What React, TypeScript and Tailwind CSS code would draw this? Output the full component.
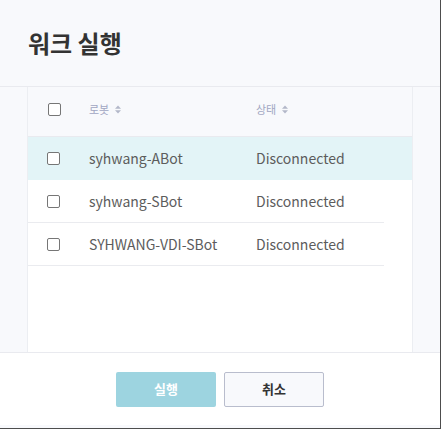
import React from "react";

const robots = [
  { name: "syhwang-ABot", status: "Disconnected", active: true },
  { name: "syhwang-SBot", status: "Disconnected", active: false },
  { name: "SYHWANG-VDI-SBot", status: "Disconnected", active: false },
];

function SortIcon() {
  return (
    <svg width="6" height="9" viewBox="0 0 6 9" className="ml-[6px]">
      <path d="M3 0.5 L6 3.8 L0 3.8 Z" fill="#b3b7c9" />
      <path d="M3 8.5 L6 5.2 L0 5.2 Z" fill="#b3b7c9" />
    </svg>
  );
}

function Checkbox() {
  return (
    <span className="block w-[13px] h-[13px] rounded-[2px] border border-[#767676] bg-white" />
  );
}

function App() {
  return (
    <div
      className="w-[441px] h-[429px] bg-[#f8f9fc] border-r border-b border-[#4d4d4d] flex flex-col"
      style={{ fontFamily: '"Noto Sans CJK KR", "Noto Sans", sans-serif' }}
    >
      <header className="h-[87px] shrink-0 border-b border-[#e9eaef] flex items-center px-[28px]">
        <h1 className="text-[24px] font-bold text-[#333] leading-none">워크 실행</h1>
      </header>

      <div className="h-[265px] shrink-0 flex pl-[27px]">
        <div className="w-[386px] bg-white border-x border-[#eceef2] flex flex-col">
          <div className="h-[50px] pb-[4px] bg-[#f8f9fc] border-b border-[#e9eaef] flex items-center text-[11px] text-[#a1a6c2]">
            <div className="w-[61px] pl-[20px]">
              <Checkbox />
            </div>
            <div className="w-[167px] flex items-center">
              로봇
              <SortIcon />
            </div>
            <div className="flex items-center">
              상태
              <SortIcon />
            </div>
          </div>
          {robots.map((r) => (
            <div
              key={r.name}
              className={
                r.active
                  ? "h-[43px] bg-[#e3f4f7] flex items-center text-[14px] text-[#5c5c5c]"
                  : "h-[43px] w-[356px] border-b border-[#eaebef] flex items-center text-[14px] text-[#5c5c5c]"
              }
            >
              <div className="w-[61px] pl-[19px]">
                <Checkbox />
              </div>
              <div className="w-[167px]">{r.name}</div>
              <div>{r.status}</div>
            </div>
          ))}
        </div>
      </div>

      <footer className="h-[73px] shrink-0 bg-white border-t border-[#e9eaef] flex items-center justify-center gap-[8px]">
        <button className="w-[100px] h-[35px] rounded-[2px] bg-[#9dd4e0] text-white text-[13px] font-bold">
          실행
        </button>
        <button className="w-[100px] h-[35px] rounded-[2px] bg-[#f8f9fc] border border-[#b9bdcd] text-[#333] text-[13px] font-bold">
          취소
        </button>
      </footer>
      <div className="h-[3px] shrink-0 bg-[#f8f9fc]" />
    </div>
  );
}

export default App;
